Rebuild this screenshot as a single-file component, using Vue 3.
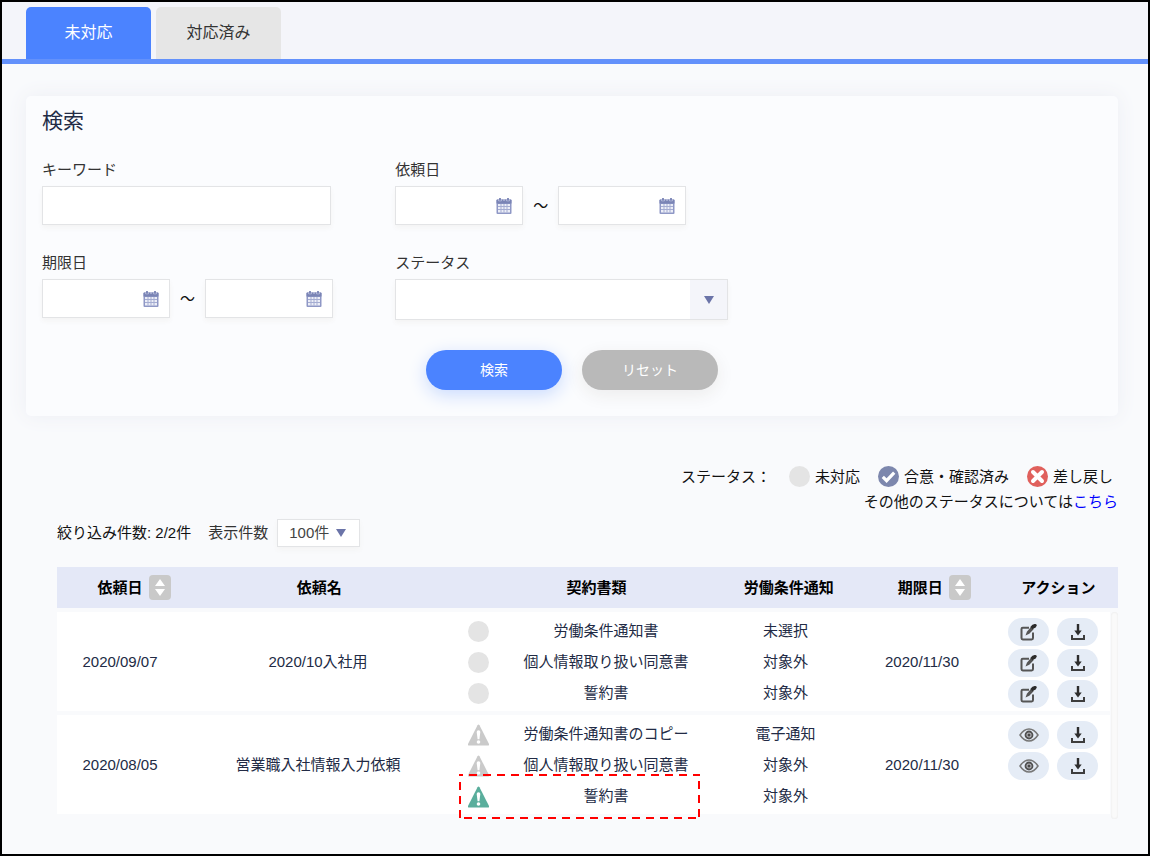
<script setup>
import { ref } from 'vue'

const tabs = ['未対応', '対応済み']
const activeTab = ref('未対応')
const pageSize = ref('100件')

const columns = [
  { label: '依頼日', sortable: true },
  { label: '依頼名' },
  { label: '契約書類' },
  { label: '労働条件通知' },
  { label: '期限日', sortable: true },
  { label: 'アクション' },
]

const requests = [
  {
    date: '2020/09/07',
    name: '2020/10入社用',
    due: '2020/11/30',
    documents: [
      { name: '労働条件通知書', status: 'pending', notice: '未選択', action: 'edit' },
      { name: '個人情報取り扱い同意書', status: 'pending', notice: '対象外', action: 'edit' },
      { name: '誓約書', status: 'pending', notice: '対象外', action: 'edit' },
    ],
  },
  {
    date: '2020/08/05',
    name: '営業職入社情報入力依頼',
    due: '2020/11/30',
    documents: [
      { name: '労働条件通知書のコピー', status: 'warning', notice: '電子通知', action: 'view' },
      { name: '個人情報取り扱い同意書', status: 'warning', notice: '対象外', action: 'view' },
      { name: '誓約書', status: 'alert', notice: '対象外', highlighted: true },
    ],
  },
]
</script>

<template>
  <div class="page">
    <nav class="tabs">
      <button
        v-for="tab in tabs"
        :key="tab"
        type="button"
        class="tab"
        :class="{ active: tab === activeTab }"
        @click="activeTab = tab"
      >{{ tab }}</button>
    </nav>

    <main class="content">
      <form class="search" @submit.prevent>
        <h2 class="search-title">検索</h2>
        <div class="fields">
          <div class="field">
            <label for="keyword">キーワード</label>
            <input id="keyword" type="text" class="box keyword">
          </div>
          <div v-for="range in [{ id: 'requested', label: '依頼日' }, { id: 'due', label: '期限日' }]" :key="range.id" class="field" :class="range.id">
            <label :for="range.id + '-from'">{{ range.label }}</label>
            <div class="range">
              <template v-for="end in ['from', 'to']" :key="end">
                <span v-if="end === 'to'" class="tilde">～</span>
                <div class="box date">
                  <input :id="range.id + '-' + end" type="text" :aria-label="range.label + (end === 'from' ? '（開始）' : '（終了）')">
                  <svg width="16" height="16" viewBox="0 0 16 16" aria-hidden="true">
                    <rect x="0.500" y="1.500" width="15" height="14.500" rx="1" fill="#8f98c6" />
                    <path d="M0.500 2.500q0-1 1-1h13q1 0 1 1V5.500h-15z" fill="#7a84b5" />
                    <path d="M2.600 1.200v1.600h2.800V1.200M10.600 1.200v1.600h2.800V1.200" fill="none" stroke="#c9cee6" stroke-width="0.800" />
                    <path d="M4 0v2.400M12 0v2.400" stroke="#7a84b5" stroke-width="1.800" />
                    <path d="M7 1.500h2v0.900H7z" fill="#c9cee6" />
                    <path d="M2 6h12v8.500H2z" fill="#eceef7" />
                    <path d="M5 6v8.500M8 6v8.500M11 6v8.500" stroke="#a5add2" stroke-width="1" />
                    <path d="M2 8.500h12M2 11.500h12" stroke="#a5add2" stroke-width="1" />
                  </svg>
                </div>
              </template>
            </div>
          </div>
          <div class="field">
            <label for="status">ステータス</label>
            <div class="box status-select">
              <select id="status"><option></option></select>
              <span class="arrow-box">
                <svg width="10" height="8" viewBox="0 0 10 8" aria-hidden="true"><path d="M0 0h10L5 8z" fill="#6b74a8" /></svg>
              </span>
            </div>
          </div>
        </div>
        <div class="buttons">
          <button type="submit" class="pill primary">検索</button>
          <button type="reset" class="pill secondary">リセット</button>
        </div>
      </form>

      <section class="legend">
        <div class="legend-row">
          <span>ステータス：</span>
          <span class="legend-item"><i class="dot"></i>未対応</span>
          <span class="legend-item">
            <svg width="21" height="21" viewBox="0 0 21 21" aria-hidden="true">
              <circle cx="10.500" cy="10.500" r="10.500" fill="#7d87ad" />
              <path d="M4.800 10.800l3.800 3.800 7.600-8" fill="none" stroke="#fff" stroke-width="3.200" />
            </svg>合意・確認済み
          </span>
          <span class="legend-item">
            <svg width="21" height="21" viewBox="0 0 21 21" aria-hidden="true">
              <circle cx="10.500" cy="10.500" r="10.500" fill="#e0605c" />
              <path d="M6 6l9 9M15 6l-9 9" stroke="#fff" stroke-width="4" stroke-linecap="round" />
            </svg>差し戻し
          </span>
        </div>
        <p>その他のステータスについては<a href="#">こちら</a></p>
      </section>

      <section class="results">
        <div class="filter">
          <span>絞り込み件数: 2/2件</span>
          <label for="page-size">表示件数</label>
          <div class="box size-select">
            <select id="page-size" v-model="pageSize"><option>100件</option></select>
            <svg width="10" height="8" viewBox="0 0 10 8" aria-hidden="true"><path d="M0 0h10L5 8z" fill="#6b74a8" /></svg>
          </div>
        </div>

        <table>
          <thead>
            <tr>
              <th v-for="column in columns" :key="column.label" scope="col">
                <div class="heading">
                  <span>{{ column.label }}</span>
                  <button v-if="column.sortable" type="button" class="sort" :aria-label="column.label + 'で並べ替え'">
                    <svg width="10" height="17" viewBox="0 0 10 17" aria-hidden="true"><path d="M0 7L5 0l5 7zM0 10h10l-5 7z" fill="#fff" /></svg>
                  </button>
                </div>
              </th>
            </tr>
          </thead>
          <tbody>
            <tr v-for="request in requests" :key="request.date">
              <td>{{ request.date }}</td>
              <td>{{ request.name }}</td>
              <td>
                <ul>
                  <li v-for="doc in request.documents" :key="doc.name" class="document">
                    <span class="status-icon">
                      <i v-if="doc.status === 'pending'" class="dot"></i>
                      <svg v-else width="21" height="22" viewBox="0 0 21 22" aria-hidden="true">
                        <path d="M9.500 1.300q1-1.600 2 0L21 20q0.300 1.500-1 1.500H1Q-0.300 21.500 0 20z" :fill="doc.status === 'alert' ? '#5aae9c' : '#cacaca'" />
                        <path d="M8.700 8q0-1.800 1.800-1.800t1.800 1.800l-0.900 7.200h-1.800z" fill="#fff" />
                        <circle cx="10.500" cy="18" r="1.800" fill="#fff" />
                      </svg>
                    </span>
                    <span>{{ doc.name }}</span>
                    <svg v-if="doc.highlighted" class="highlight" aria-hidden="true">
                      <rect width="100%" height="100%" fill="none" stroke="#f00" stroke-width="4" stroke-dasharray="8 6" stroke-dashoffset="4" />
                    </svg>
                  </li>
                </ul>
              </td>
              <td>
                <ul><li v-for="doc in request.documents" :key="doc.name">{{ doc.notice }}</li></ul>
              </td>
              <td>{{ request.due }}</td>
              <td>
                <ul>
                  <li v-for="doc in request.documents" :key="doc.name" class="actions">
                    <template v-if="doc.action">
                      <button type="button" class="action" :aria-label="doc.action === 'edit' ? '編集' : '表示'">
                        <svg v-if="doc.action === 'edit'" width="18" height="18" viewBox="0 0 18 18" aria-hidden="true">
                          <path d="M9 4.800H2.800Q1.500 4.800 1.500 6.100v9q0 1.300 1.300 1.300h8.900q1.300 0 1.300-1.300V9.500" fill="none" stroke="#555" stroke-width="2" />
                          <path d="M5.500 12.500l1.400-3.800 4-4.700 2.700 2.300-4.300 4.500z" fill="#555" />
                          <path d="M10.300 4q2.500-3.600 5.200-2.900 2.500 0.800 0.200 3.100l-3.100 2z" fill="#2b2b2b" />
                        </svg>
                        <svg v-else width="20" height="14" viewBox="0 0 20 14" aria-hidden="true">
                          <path d="M1 7Q5 1 10 1t9 6q-4 6-9 6T1 7z" fill="none" stroke="#777" stroke-width="1.500" />
                          <circle cx="10" cy="7" r="3.500" fill="#b5b5ba" stroke="#505050" stroke-width="1.800" />
                          <circle cx="10" cy="7" r="1.500" fill="#484848" />
                        </svg>
                      </button>
                      <button type="button" class="action" aria-label="ダウンロード">
                        <svg width="16" height="18" viewBox="0 0 16 18" aria-hidden="true">
                          <path d="M8 1v8" stroke="#2d2d2d" stroke-width="2.400" />
                          <path d="M4.300 7.500h7.400L8 12.500z" fill="#2d2d2d" />
                          <path d="M2 12v4h12v-4" fill="none" stroke="#3d3d3d" stroke-width="2" />
                        </svg>
                      </button>
                    </template>
                  </li>
                </ul>
              </td>
            </tr>
          </tbody>
        </table>
      </section>
    </main>
  </div>
</template>

<style>
body {
  margin: 0;
}
</style>

<style scoped>
.page,
.page * {
  box-sizing: border-box;
}

.page {
  min-height: 100vh;
  border: 2px solid #000;
  background: #f9fafc;
  color: #111;
  font: 15px/24px "Liberation Sans", "Noto Sans CJK JP", sans-serif;
}

button,
input,
select {
  margin: 0;
  padding: 0;
  border: 0;
  background: none;
  color: inherit;
  font: inherit;
}

button {
  cursor: pointer;
}

svg {
  display: block;
  flex: none;
}

.tabs {
  display: flex;
  gap: 5px;
  padding: 5px 24px 0;
  border-bottom: 5px solid #6391fb;
  background: #f4f5fa;
}

.tab {
  width: 125px;
  height: 52px;
  border-radius: 5px 5px 0 0;
  background: #e6e6e6;
  color: #333;
  font-size: 16px;
}

.tab.active {
  background: #4b83ff;
  color: #fff;
}

.content {
  padding: 32px 30px 35px 24px;
}

.search {
  padding: 9px 16px 26px;
  border-radius: 5px;
  background: #fbfcfe;
  box-shadow: 0 0 20px #eceef4;
}

.search-title {
  margin: 0 0 21px;
  color: #222b45;
  font-size: 21px;
  font-weight: 400;
  line-height: 32px;
}

.fields {
  display: grid;
  grid-template-columns: repeat(3, 1fr);
  row-gap: 26px;
}

.requested {
  grid-column: 2 / 4;
}

.field label {
  display: block;
  margin-bottom: 4px;
  color: #333;
}

.box {
  border: 1px solid #e3e4e6;
  background: #fff;
  box-shadow: 0 3px 5px #f4f4f4;
}

.keyword {
  display: block;
  width: 289px;
  height: 39px;
  padding: 0 10px;
}

.range {
  display: flex;
  align-items: center;
}

.date {
  display: flex;
  align-items: center;
  width: 128px;
  height: 39px;
  padding: 0 10px;
}

.date input {
  flex: 1;
  min-width: 0;
}

.tilde {
  width: 35px;
  text-align: center;
}

.status-select {
  display: flex;
  position: relative;
  width: 333px;
  height: 41px;
}

select {
  appearance: none;
}

.status-select select {
  width: 100%;
}

.arrow-box {
  display: flex;
  position: absolute;
  inset: 0 0 0 auto;
  align-items: center;
  justify-content: center;
  width: 37px;
  background: #f4f5fa;
  pointer-events: none;
}

.buttons {
  display: flex;
  justify-content: center;
  gap: 20px;
  margin-top: 30px;
}

.pill {
  width: 136px;
  height: 40px;
  border-radius: 20px;
  color: #fff;
  font-size: 14px;
}

.primary {
  background: #4b83ff;
  box-shadow: 0 5px 18px #c9dafd;
}

.secondary {
  background: #b9b9b9;
  box-shadow: 0 5px 18px #ececec;
}

.legend {
  margin-top: 48px;
  line-height: 25px;
  text-align: right;
}

.legend-row {
  display: flex;
  justify-content: flex-end;
  gap: 18px;
  padding-right: 5px;
}

.legend-item {
  display: flex;
  align-items: center;
  gap: 5px;
}

.dot {
  width: 21px;
  height: 21px;
  border-radius: 50%;
  background: #e4e4e4;
}

.legend p {
  margin: 0;
}

.legend a {
  color: #00f;
  text-decoration: none;
}

.results {
  margin: 5px 0 0 31px;
}

.filter {
  display: flex;
  align-items: center;
}

.filter label {
  margin: 0 9px 0 17px;
  color: #333;
}

.size-select {
  display: flex;
  position: relative;
  align-items: center;
  width: 83px;
  height: 28px;
}

.size-select select {
  width: 100%;
  height: 100%;
  padding-left: 11px;
  color: #444;
}

.size-select svg {
  position: absolute;
  right: 13px;
  pointer-events: none;
}

table,
thead,
tbody {
  display: block;
}

table {
  margin-top: 20px;
}

tr {
  display: grid;
  align-items: center;
}

th,
td {
  padding: 0;
  text-align: center;
  white-space: nowrap;
}

thead tr {
  grid-template-columns: 127fr 274fr 284fr 98fr 162fr 116fr;
  height: 41px;
  padding-right: 2px;
  background: #e4e8f7;
  color: #000;
}

.heading {
  display: grid;
  grid-template-columns: minmax(0, 1fr) auto minmax(0, 1fr);
  align-items: center;
  column-gap: 6px;
}

.heading span {
  grid-column: 2;
}

.sort {
  display: flex;
  align-items: center;
  justify-content: center;
  width: 22px;
  height: 25px;
  border-radius: 4px;
  background: #c9c9c9;
}

tbody {
  display: grid;
  position: relative;
  gap: 4px;
  margin-top: 4px;
  padding: 0 8px 5px 0;
}

tbody::after {
  position: absolute;
  inset: 0 0 0 auto;
  width: 7px;
  border-radius: 4px;
  background: #fafafa;
  box-shadow: inset 0 0 2px #e4e4e4;
  content: "";
}

tbody tr {
  grid-template-columns: 126fr 270fr 256fr 153fr 120fr 128fr;
  padding: 3px 0;
  background: #fff;
  color: #222b45;
}

ul {
  margin: 0;
  padding: 0;
  list-style: none;
}

li {
  height: 31px;
  line-height: 31px;
}

.document {
  display: grid;
  position: relative;
  grid-template-columns: 50px 1fr;
}

.status-icon {
  display: flex;
  align-items: center;
  justify-content: center;
  padding-top: 2px;
}

.highlight {
  position: absolute;
  top: -6px;
  left: 6px;
  width: calc(100% - 15px);
  height: 45px;
}

.actions {
  display: flex;
  justify-content: flex-end;
  gap: 8px;
  padding: 3px 12px 0 0;
}

.action {
  display: flex;
  align-items: center;
  justify-content: center;
  width: 41px;
  height: 28px;
  border-radius: 14px;
  background: #e5ecf6;
}
</style>
